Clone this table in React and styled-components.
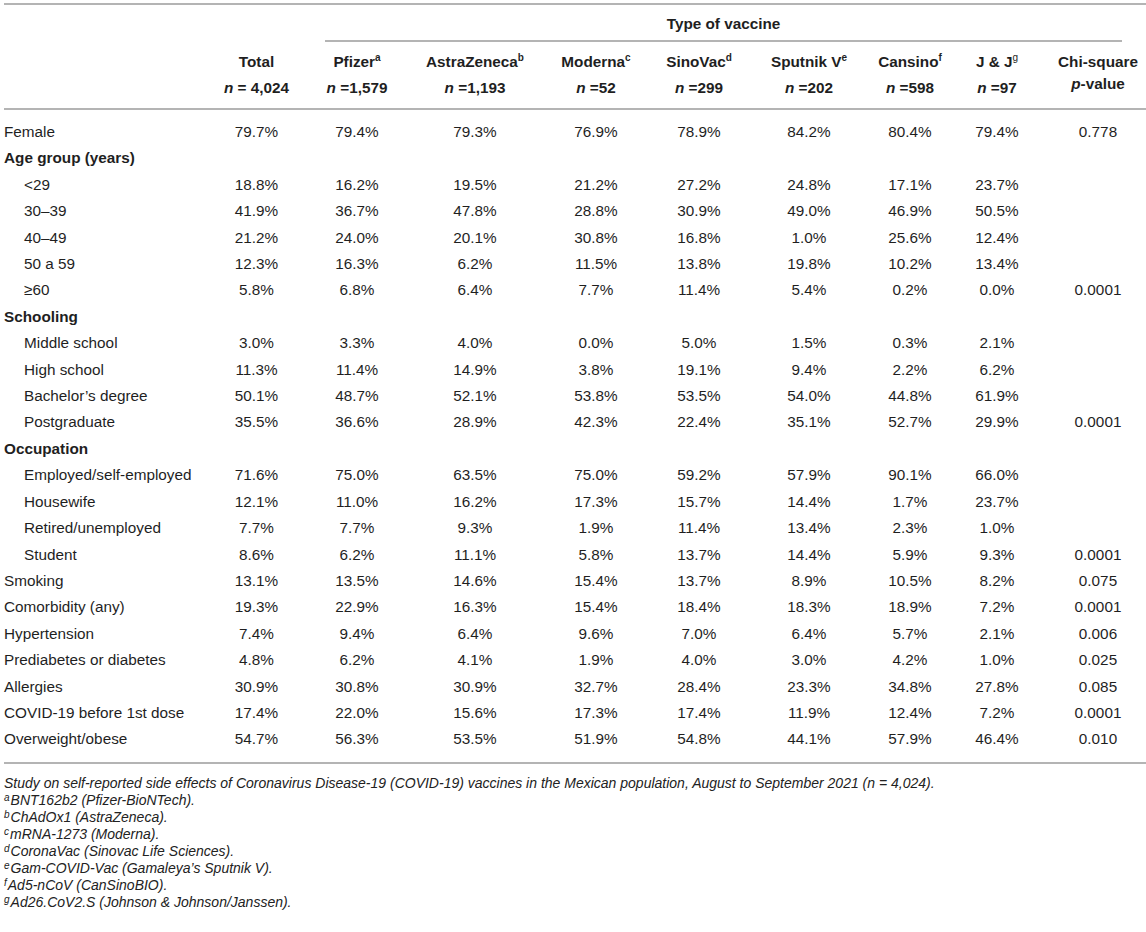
import styled, { createGlobalStyle } from "styled-components";

const GlobalStyle = createGlobalStyle`
  body {
    margin: 0;
    background: #ffffff;
    font-family: "Liberation Sans", Arial, sans-serif;
    color: #1f1f1f;
  }
`;

const Page = styled.div`
  padding: 3px 0 0 4px;
  width: 1142px;
`;

const Table = styled.table`
  width: 1142px;
  table-layout: fixed;
  border-collapse: collapse;
  font-size: 15.3px;
  border-top: 2px solid #b4b4b4;
  border-bottom: 2px solid #b4b4b4;
`;

const Head = styled.thead`
  border-bottom: 2px solid #b4b4b4;
`;

const SpanCell = styled.th`
  padding: 0 24px 0 19px;
  font-weight: bold;
`;

const SpanRule = styled.div`
  border-bottom: 2px solid #b4b4b4;
  padding: 9px 0 6px;
  line-height: 20px;
  text-align: center;
`;

const NameCell = styled.th`
  font-weight: bold;
  text-align: center;
  vertical-align: top;
  line-height: 20px;
  padding: ${(p) => (p.$count ? "3px 0 10px" : "10px 0 3px")};
  white-space: nowrap;
`;

const ChiCell = styled.th`
  font-weight: bold;
  text-align: center;
  vertical-align: top;
  line-height: 22px;
  padding: 9px 0 0 6px;
`;

const Sup = styled.sup`
  font-size: 10px;
  line-height: 0;
  vertical-align: 6px;
  font-weight: ${(p) => (p.$light ? "normal" : "inherit")};
`;

const Italic = styled.i`
  font-style: italic;
`;

const Row = styled.tr`
  &:first-child td {
    padding-top: 9px;
  }
  &:last-child td {
    padding-bottom: 9px;
  }
`;

const Label = styled.td`
  padding: 0 0 0 ${(p) => (p.$indent ? "20px" : "0")};
  font-weight: ${(p) => (p.$group ? "bold" : "normal")};
  line-height: 26.4px;
  white-space: nowrap;
`;

const Value = styled.td`
  padding: 0 0 0 ${(p) => (p.$chi ? "6px" : "0")};
  text-align: center;
  line-height: 26.4px;
`;

const Notes = styled.div`
  margin-top: 11px;
  font-size: 14px;
  line-height: 17px;
  font-style: italic;
  color: #222;
`;

const Note = styled.div``;

const NoteMark = styled.sup`
  font-size: 10px;
  line-height: 0;
  vertical-align: 4px;
  margin-right: 1px;
`;

const widths = [203, 99, 102, 134, 108, 98, 122, 80, 94, 102];

const vaccines = [
  { name: "Pfizer", mark: "a", n: "1,579" },
  { name: "AstraZeneca", mark: "b", n: "1,193" },
  { name: "Moderna", mark: "c", n: "52" },
  { name: "SinoVac", mark: "d", n: "299" },
  { name: "Sputnik V", mark: "e", n: "202" },
  { name: "Cansino", mark: "f", n: "598" },
  { name: "J & J", mark: "g", n: "97", light: true },
];

const r = (label, s, p, indent) => ({
  label,
  values: s.split(" ").map((v) => v + "%"),
  p,
  indent,
});

const rows = [
  r("Female", "79.7 79.4 79.3 76.9 78.9 84.2 80.4 79.4", "0.778"),
  { group: "Age group (years)" },
  r("<29", "18.8 16.2 19.5 21.2 27.2 24.8 17.1 23.7", "", true),
  r("30–39", "41.9 36.7 47.8 28.8 30.9 49.0 46.9 50.5", "", true),
  r("40–49", "21.2 24.0 20.1 30.8 16.8 1.0 25.6 12.4", "", true),
  r("50 a 59", "12.3 16.3 6.2 11.5 13.8 19.8 10.2 13.4", "", true),
  r("≥60", "5.8 6.8 6.4 7.7 11.4 5.4 0.2 0.0", "0.0001", true),
  { group: "Schooling" },
  r("Middle school", "3.0 3.3 4.0 0.0 5.0 1.5 0.3 2.1", "", true),
  r("High school", "11.3 11.4 14.9 3.8 19.1 9.4 2.2 6.2", "", true),
  r("Bachelor’s degree", "50.1 48.7 52.1 53.8 53.5 54.0 44.8 61.9", "", true),
  r("Postgraduate", "35.5 36.6 28.9 42.3 22.4 35.1 52.7 29.9", "0.0001", true),
  { group: "Occupation" },
  r("Employed/self-employed", "71.6 75.0 63.5 75.0 59.2 57.9 90.1 66.0", "", true),
  r("Housewife", "12.1 11.0 16.2 17.3 15.7 14.4 1.7 23.7", "", true),
  r("Retired/unemployed", "7.7 7.7 9.3 1.9 11.4 13.4 2.3 1.0", "", true),
  r("Student", "8.6 6.2 11.1 5.8 13.7 14.4 5.9 9.3", "0.0001", true),
  r("Smoking", "13.1 13.5 14.6 15.4 13.7 8.9 10.5 8.2", "0.075"),
  r("Comorbidity (any)", "19.3 22.9 16.3 15.4 18.4 18.3 18.9 7.2", "0.0001"),
  r("Hypertension", "7.4 9.4 6.4 9.6 7.0 6.4 5.7 2.1", "0.006"),
  r("Prediabetes or diabetes", "4.8 6.2 4.1 1.9 4.0 3.0 4.2 1.0", "0.025"),
  r("Allergies", "30.9 30.8 30.9 32.7 28.4 23.3 34.8 27.8", "0.085"),
  r("COVID-19 before 1st dose", "17.4 22.0 15.6 17.3 17.4 11.9 12.4 7.2", "0.0001"),
  r("Overweight/obese", "54.7 56.3 53.5 51.9 54.8 44.1 57.9 46.4", "0.010"),
];

const notes = [
  ["a", "BNT162b2 (Pfizer-BioNTech)."],
  ["b", "ChAdOx1 (AstraZeneca)."],
  ["c", "mRNA-1273 (Moderna)."],
  ["d", "CoronaVac (Sinovac Life Sciences)."],
  ["e", "Gam-COVID-Vac (Gamaleya’s Sputnik V)."],
  ["f", "Ad5-nCoV (CanSinoBIO)."],
  ["g", "Ad26.CoV2.S (Johnson & Johnson/Janssen)."],
];

export default function App() {
  return (
    <Page>
      <GlobalStyle />
      <Table>
        <colgroup>
          {widths.map((w, i) => (
            <col key={i} style={{ width: w }} />
          ))}
        </colgroup>
        <Head>
          <tr>
            <th />
            <th />
            <SpanCell colSpan={8}>
              <SpanRule>Type of vaccine</SpanRule>
            </SpanCell>
            <th />
          </tr>
          <tr>
            <th rowSpan={2} />
            <NameCell>Total</NameCell>
            {vaccines.map((v) => (
              <NameCell key={v.name}>
                {v.name}
                <Sup $light={v.light}>{v.mark}</Sup>
              </NameCell>
            ))}
            <ChiCell rowSpan={2}>
              Chi-square
              <br />
              <Italic>p</Italic>-value
            </ChiCell>
          </tr>
          <tr>
            <NameCell $count>
              <Italic>n</Italic> = 4,024
            </NameCell>
            {vaccines.map((v) => (
              <NameCell $count key={v.name}>
                <Italic>n</Italic> ={v.n}
              </NameCell>
            ))}
          </tr>
        </Head>
        <tbody>
          {rows.map((row, i) =>
            row.group ? (
              <Row key={i}>
                <Label $group>{row.group}</Label>
                <Value colSpan={9} />
              </Row>
            ) : (
              <Row key={i}>
                <Label $indent={row.indent}>{row.label}</Label>
                {row.values.map((v, j) => (
                  <Value key={j}>{v}</Value>
                ))}
                <Value $chi>{row.p}</Value>
              </Row>
            )
          )}
        </tbody>
      </Table>
      <Notes>
        <Note>
          Study on self-reported side effects of Coronavirus Disease-19
          (COVID-19) vaccines in the Mexican population, August to September
          2021 (n = 4,024).
        </Note>
        {notes.map(([m, t]) => (
          <Note key={m}>
            <NoteMark>{m}</NoteMark>
            {t}
          </Note>
        ))}
      </Notes>
    </Page>
  );
}
